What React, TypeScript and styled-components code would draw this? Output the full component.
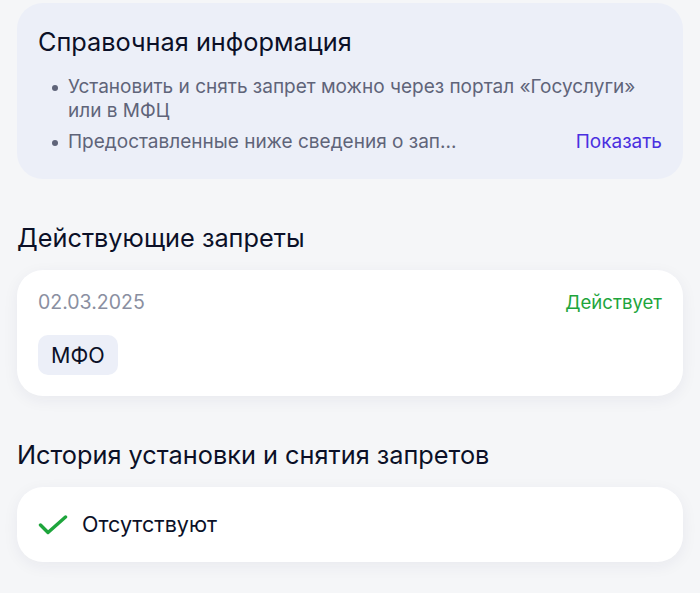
import styled, { createGlobalStyle } from "styled-components";

const GlobalStyle = createGlobalStyle`
  body {
    margin: 0;
    background: #f5f6f8;
    font-family: Inter, "Noto Sans", sans-serif;
    color: #0b1027;
  }
`;

const INFO_ITEMS = [
  {
    text: "Установить и снять запрет можно через портал «Госуслуги» или в МФЦ",
  },
  {
    text: "Предоставленные ниже сведения о зап...",
    action: "Показать",
  },
];

const CheckIcon = () => (
  <svg width="30" height="20" viewBox="0 0 30 20" fill="none">
    <path
      d="M2.5 10L10 17.5L27.5 2"
      stroke="#1ea53c"
      strokeWidth="3.4"
      strokeLinecap="round"
      strokeLinejoin="round"
    />
  </svg>
);

const App = () => {
  return (
    <>
      <GlobalStyle />
      <Page>
        <InfoCard>
          <InfoTitle>Справочная информация</InfoTitle>
          <InfoList>
            {INFO_ITEMS.map((item) => (
              <InfoItem key={item.text}>
                <Bullet />
                <InfoText>{item.text}</InfoText>
                {item.action && <ShowLink>{item.action}</ShowLink>}
              </InfoItem>
            ))}
          </InfoList>
        </InfoCard>

        <Section>
          <SectionTitle>Действующие запреты</SectionTitle>
          <Card>
            <CardRow>
              <DateText>02.03.2025</DateText>
              <Status>Действует</Status>
            </CardRow>
            <Chip>МФО</Chip>
          </Card>
        </Section>

        <Section>
          <SectionTitle>История установки и снятия запретов</SectionTitle>
          <EmptyCard>
            <CheckIcon />
            <EmptyText>Отсутствуют</EmptyText>
          </EmptyCard>
        </Section>
      </Page>
    </>
  );
};
export default App;

const Page = styled.div`
  padding: 3px 17px 30px;
  display: flex;
  flex-direction: column;
`;

const InfoCard = styled.div`
  background: #eceff8;
  border-radius: 26px;
  padding: 23px 21px 25px 21px;
`;

const InfoTitle = styled.h2`
  margin: 0 0 17px;
  font-size: 25.3px;
  line-height: 32px;
  font-weight: 400;
  color: #0b1027;
`;

const InfoList = styled.ul`
  margin: 0;
  padding: 0;
  list-style: none;
  display: flex;
  flex-direction: column;
  gap: 7px;
`;

const InfoItem = styled.li`
  display: flex;
  align-items: flex-start;
  font-size: 19px;
  line-height: 24px;
  color: #5f6479;
`;

const Bullet = styled.span`
  width: 6px;
  height: 6px;
  border-radius: 50%;
  background: #5f6479;
  margin: 10px 10px 0 14px;
  flex-shrink: 0;
`;

const InfoText = styled.span`
  flex: 1;
  padding-right: 20px;
`;

const ShowLink = styled.a`
  color: #4a2fe0;
  cursor: pointer;
`;

const Section = styled.section`
  margin-top: 43px;
  display: flex;
  flex-direction: column;
  gap: 16px;
`;

const SectionTitle = styled.h3`
  margin: 0;
  font-size: 25.3px;
  line-height: 32px;
  font-weight: 400;
  color: #0b1027;
`;

const Card = styled.div`
  background: #ffffff;
  border-radius: 26px;
  padding: 19px 21px 21px;
  box-shadow: 0 4px 16px rgba(30, 40, 80, 0.06);
  display: flex;
  flex-direction: column;
  align-items: flex-start;
  gap: 20px;
`;

const CardRow = styled.div`
  align-self: stretch;
  display: flex;
  justify-content: space-between;
  align-items: center;
  line-height: 26px;
`;

const DateText = styled.span`
  font-size: 19.5px;
  color: #8a8fa1;
`;

const Status = styled.span`
  font-size: 18.6px;
  color: #1ea53c;
`;

const Chip = styled.span`
  background: #eceff8;
  border-radius: 10px;
  padding: 7px 13px;
  font-size: 21.5px;
  line-height: 26px;
  color: #0b1027;
`;

const EmptyCard = styled.div`
  background: #ffffff;
  border-radius: 26px;
  padding: 24px 21px;
  box-shadow: 0 4px 16px rgba(30, 40, 80, 0.06);
  display: flex;
  align-items: center;
  gap: 14px;
`;

const EmptyText = styled.span`
  font-size: 21.5px;
  line-height: 27px;
  color: #0b1027;
`;
